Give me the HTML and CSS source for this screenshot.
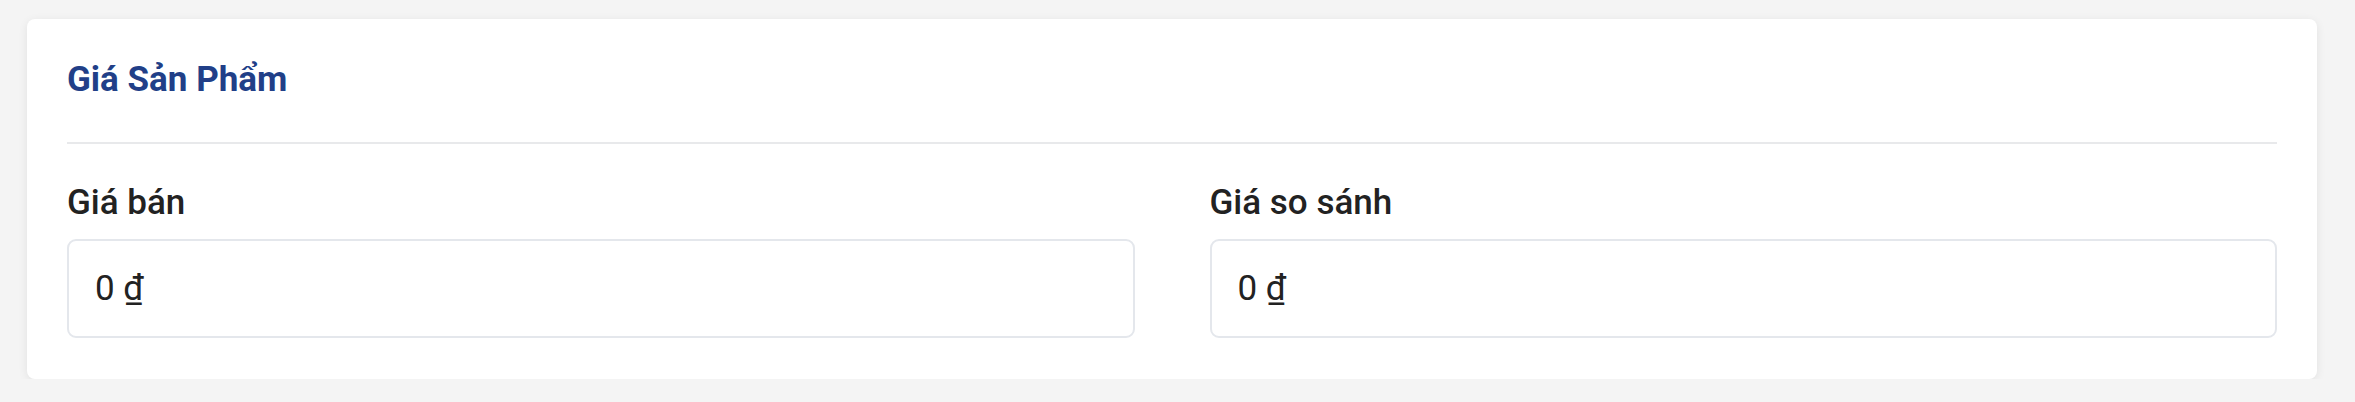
FILE: index.html
```html
<!DOCTYPE html>
<html lang="vi">
<head>
<meta charset="utf-8">
<title>Giá Sản Phẩm</title>
<link rel="stylesheet" href="styles.css">
</head>
<body>
<section class="card">
  <h2 class="card-title">Giá Sản Phẩm</h2>
  <hr class="divider">
  <div class="fields">
    <div class="field">
      <label class="field-label">Giá bán</label>
      <div class="field-input">0 ₫</div>
    </div>
    <div class="field">
      <label class="field-label">Giá so sánh</label>
      <div class="field-input">0 ₫</div>
    </div>
  </div>
</section>
</body>
</html>
```
FILE: styles.css
```css
html, body {
  margin: 0;
  padding: 0;
}
body {
  background: #f4f4f4;
  font-family: Roboto, "Noto Sans", sans-serif;
  padding: 19px 38px 0 27px;
}
.card {
  background: #ffffff;
  border-radius: 8px;
  box-shadow: 0 2px 10px rgba(0, 0, 0, 0.08);
  padding: 42px 40px 41px;
}
.card-title {
  margin: 0;
  font-size: 35px;
  line-height: 38px;
  font-weight: 700;
  color: #213f88;
}
.divider {
  margin: 43px 0 40px;
  border: 0;
  height: 2px;
  background: #e8e9eb;
}
.fields {
  display: grid;
  grid-template-columns: 1fr 1fr;
  column-gap: 75px;
}
.field {
  display: flex;
  flex-direction: column;
}
.field-label {
  font-size: 35px;
  line-height: 38px;
  font-weight: 500;
  color: #222222;
  margin-bottom: 17px;
}
.field-input {
  height: 99px;
  box-sizing: border-box;
  border: 2px solid #e4e7ec;
  border-radius: 9px;
  display: flex;
  align-items: center;
  padding-left: 26px;
  font-size: 35px;
  color: #222222;
}
```
